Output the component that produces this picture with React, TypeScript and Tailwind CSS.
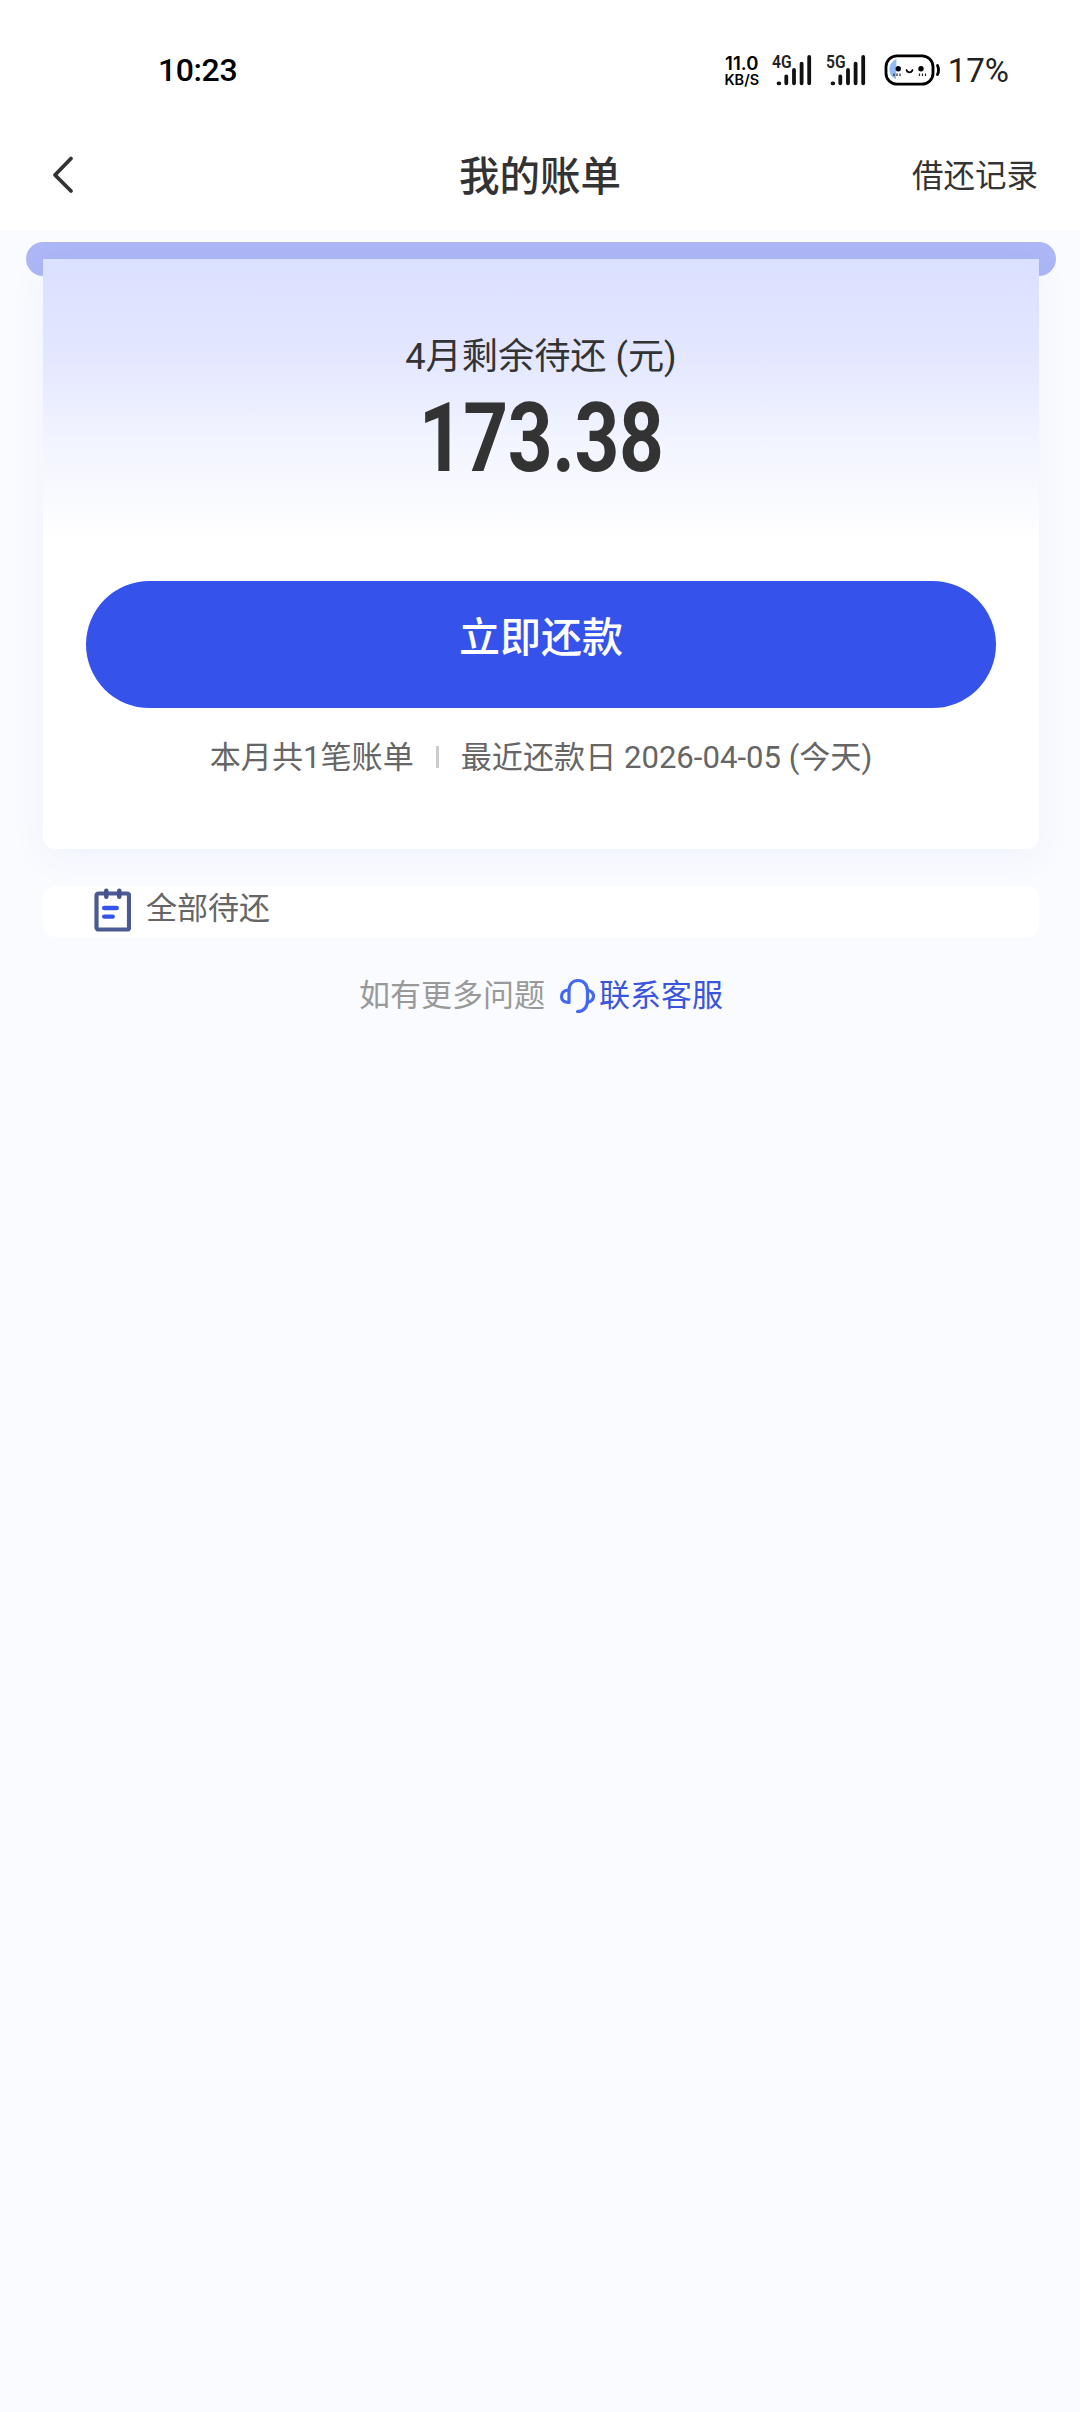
interface SignalIconProps {
  label: string;
}

function SignalIcon({ label }: SignalIconProps) {
  return (
    <div className="relative h-8 w-10 shrink-0">
      <span className="absolute left-0 top-0 origin-left scale-x-[0.82] text-[19px] leading-[15px] font-semibold text-[#222]">
        {label}
      </span>
      <svg
        className="size-full"
        viewBox="0 0 40 32"
        fill="none"
        stroke="#111"
        strokeWidth="3.8"
        strokeLinecap="round"
      >
        <path d="M6.5 29.3h.8M14.3 22.3v7M22 16v13.3M29.6 9.6v19.7M37.2 3v26.3" />
      </svg>
    </div>
  );
}

function BatteryIcon() {
  return (
    <svg className="h-8 w-14 shrink-0" viewBox="0 0 56 32" fill="none">
      <path
        d="M12.5 5C8 7 5.5 11 5.5 15.5c0 5 2.5 8.5 6.5 9.5z"
        fill="#8fbcf5"
      />
      <rect
        x="2"
        y="1.8"
        width="47"
        height="28.4"
        rx="11"
        stroke="#000"
        strokeWidth="2.8"
      />
      <path
        d="M53.5 11.5c1.2 2.6 1.2 6.4 0 9"
        stroke="#000"
        strokeWidth="2.8"
        strokeLinecap="round"
      />
      <circle cx="14.3" cy="14.8" r="2.7" fill="#000" />
      <circle cx="37" cy="14.8" r="2.7" fill="#000" />
      <path
        d="M22.5 16c1 3.2 5 3.2 6 0"
        stroke="#000"
        strokeWidth="1.8"
        strokeLinecap="round"
      />
      <path
        d="M10 19.5v2.5M13 19.5v2.5M16 19.5v2.5M35.5 19.5v2.5M38.5 19.5v2.5M41.5 19.5v2.5"
        stroke="#222"
        strokeWidth="1.2"
      />
    </svg>
  );
}

function StatusBar() {
  return (
    <div className="flex h-[140px] items-center justify-between pl-[158px] pr-[71px] text-black">
      <span className="text-[32px] leading-10 font-medium tracking-[-0.4px]">
        10:23
      </span>
      <div className="flex items-center">
        <p className="w-9 pt-0.5 text-center font-['Inter',sans-serif] text-[18.5px] leading-[17px] font-semibold whitespace-nowrap">
          11.0
          <br />
          <small className="block text-[14.5px] leading-[15px]">KB/S</small>
        </p>
        <div className="ml-3 flex gap-[14px]">
          <SignalIcon label="4G" />
          <SignalIcon label="5G" />
        </div>
        <div className="ml-[18px]">
          <BatteryIcon />
        </div>
        <span className="ml-2 pt-0.5 text-[33px] leading-10 text-[#222]">
          17%
        </span>
      </div>
    </div>
  );
}

function NavBar() {
  return (
    <div className="grid h-[90px] grid-cols-3 items-start px-[42px] text-[#333]">
      <svg
        className="ml-2 mt-[15px] h-10 w-7"
        viewBox="0 0 28 40"
        fill="none"
        stroke="#333"
        strokeWidth="3.8"
        strokeLinecap="round"
        strokeLinejoin="round"
      >
        <path d="M21 3.5L5 20L21 36" />
      </svg>
      <h1 className="mt-[7px] text-center text-[40.5px] leading-[60px] font-medium">
        我的账单
      </h1>
      <span className="mt-2 text-right text-[31.5px] leading-[58px]">
        借还记录
      </span>
    </div>
  );
}

function BillCard() {
  return (
    <section className="pt-3 pr-6 pl-[26px]">
      <div className="h-[34px] rounded-full bg-[#adb7f6]" />
      <div className="relative mx-[17px] -mt-[17px] flex h-[590px] flex-col items-center rounded-b-[12px] bg-white bg-[linear-gradient(180deg,#dae0ff_0,#e2e6ff_90px,#f3f5ff_190px,#ffffff_285px)] px-[43px] shadow-[0_8px_36px_rgba(53,83,235,0.05)]">
        <p className="mt-[71px] text-[36.2px] leading-[54px] text-[#333]">
          4月剩余待还 (元)
        </p>
        <p className="mt-2 scale-x-[0.815] text-[96px] leading-[92px] font-bold tracking-[-0.5px] text-[#333]">
          173.38
        </p>
        <button className="mt-[97px] h-[127px] w-full shrink-0 rounded-full bg-[#3553eb] pb-[14px] text-[41px] leading-[60px] font-medium text-white">
          立即还款
        </button>
        <div className="mt-[26px] flex items-center text-[31.1px] leading-[48px] whitespace-nowrap text-[#666]">
          <span>本月共1笔账单</span>
          <span className="mx-[22px] mb-0.5 h-[22px] w-[3px] bg-[#ccc]" />
          <span>最近还款日 2026-04-05 (今天)</span>
        </div>
      </div>
    </section>
  );
}

function NotepadIcon() {
  return (
    <svg
      className="-mt-[3px] h-11 w-[37px] shrink-0"
      viewBox="0 0 37 44"
      fill="none"
      strokeLinecap="round"
    >
      <rect
        x="2.5"
        y="5.5"
        width="32.5"
        height="36"
        rx="2"
        stroke="#4c5a94"
        strokeWidth="4.2"
      />
      <path d="M12.3 2.8v6M25.3 2.8v6" stroke="#46528c" strokeWidth="4.5" />
      <path d="M10.2 20h12.5M10.2 28.6h8.5" stroke="#3553eb" strokeWidth="4.4" />
    </svg>
  );
}

function HeadsetIcon() {
  return (
    <svg
      className="h-9 w-[38px] shrink-0"
      viewBox="0 0 38 36"
      fill="none"
      stroke="#4468f0"
      strokeWidth="3.2"
      strokeLinecap="round"
      strokeLinejoin="round"
    >
      <path d="M10 24.5V13C10 6.5 13.5 2.5 19 2.5S28.5 6.5 28.5 13v9c0 7-3.5 11.5-10 11.5" />
      <path d="M9.5 12C5 12.5 2.5 15 2.5 18.5s2.5 6 7 6" />
      <path d="M28.5 12c4 1 6 3.2 6 6.3s-2 5.2-6 6.2" />
    </svg>
  );
}

export default function App() {
  return (
    <div className="min-h-[2412px] w-full bg-[#fafbff] font-['Roboto','Noto_Sans_CJK_SC',sans-serif]">
      <header className="bg-white">
        <StatusBar />
        <NavBar />
      </header>
      <BillCard />
      <div className="relative mr-[41px] ml-[43px] mt-[37px] flex h-[51px] items-center rounded-[12px] bg-white pl-[51px] text-[31px] leading-[46px] text-[#666]">
        <NotepadIcon />
        <span className="ml-[15px] pb-1.5">全部待还</span>
      </div>
      <div className="mt-9 flex items-center justify-center pl-0.5 text-[31px] leading-[46px]">
        <span className="text-[#999]">如有更多问题</span>
        <span className="ml-[14px] flex items-center text-[#3a55dc]">
          <HeadsetIcon />
          <span className="ml-0.5">联系客服</span>
        </span>
      </div>
    </div>
  );
}
